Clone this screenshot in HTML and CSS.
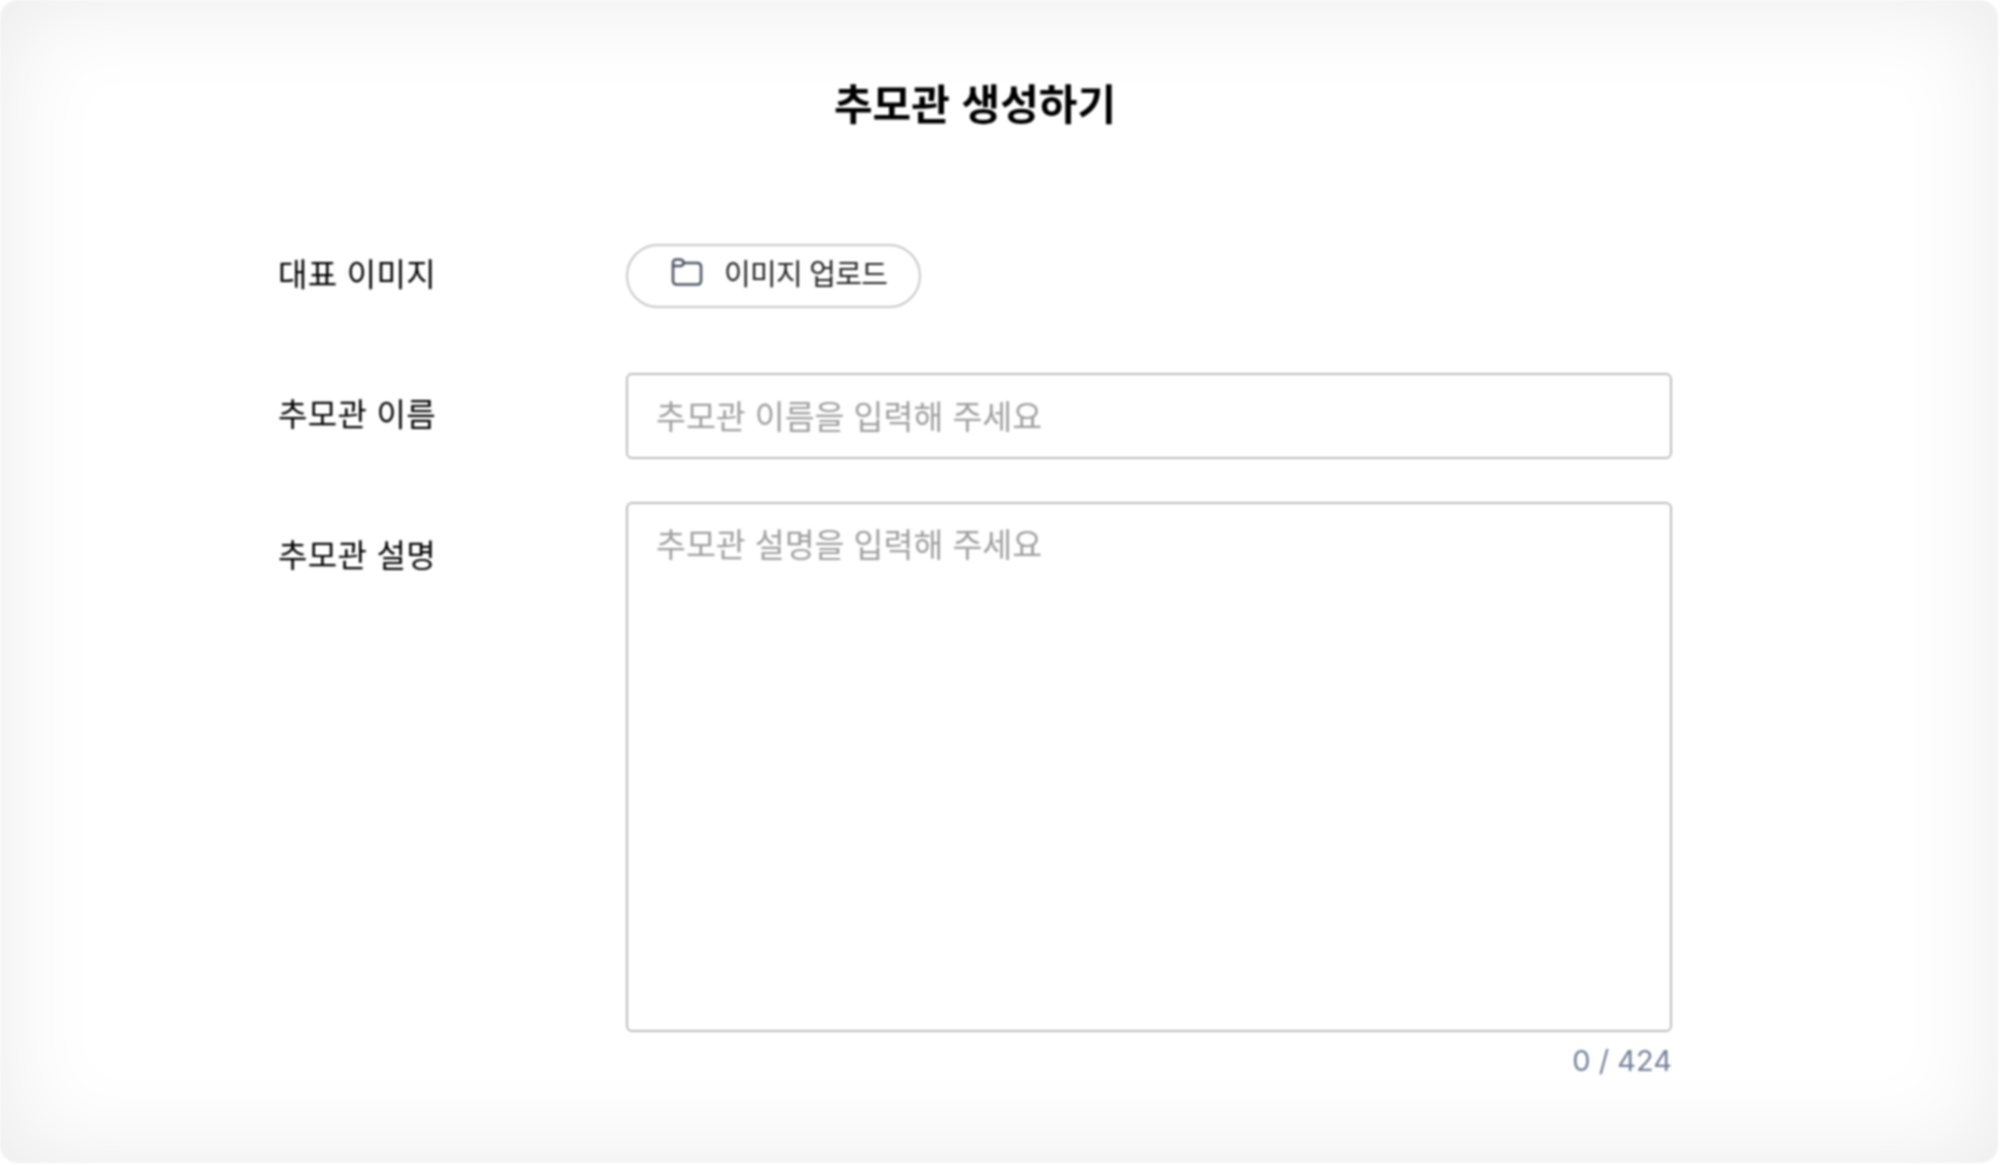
FILE: index.html
```html
<!DOCTYPE html>
<html lang="ko">
<head>
<meta charset="utf-8">
<title>추모관 생성하기</title>
<link rel="stylesheet" href="styles.css">
</head>
<body>
<main class="frame">
  <h1 class="title">추모관 생성하기</h1>
  <form class="form">
    <div class="row row-image">
      <span class="label">대표 이미지</span>
      <button type="button" class="upload">
        <svg class="folder" width="34" height="28" viewBox="0 0 34 28" fill="none" stroke="#4f5866" stroke-width="2.6" stroke-linejoin="round" aria-hidden="true">
          <path d="M3 6.5V23a3.5 3.5 0 0 0 3.5 3.5h21A3.5 3.5 0 0 0 31 23V8.5A3.5 3.5 0 0 0 27.500 5H13.500"/>
          <path d="M3 6.500V4.500A3 3 0 0 1 6 1.500h4.500a3 3 0 0 1 3 3.500 3 3 0 0 1-3 3H6A3 3 0 0 1 3 6.500z"/>
        </svg>
        <span>이미지 업로드</span>
      </button>
    </div>
    <div class="row row-name">
      <label class="label" for="name">추모관 이름</label>
      <input class="field" id="name" type="text" placeholder="추모관 이름을 입력해 주세요">
    </div>
    <div class="row row-desc">
      <label class="label" for="desc">추모관 설명</label>
      <div class="desc-col">
        <textarea class="field area" id="desc" placeholder="추모관 설명을 입력해 주세요"></textarea>
        <div class="counter">0 / 424</div>
      </div>
    </div>
  </form>
</main>
</body>
</html>
```
FILE: styles.css
```css
* { box-sizing: border-box; }
html, body { margin: 0; height: 100%; background: #fff; }
body { padding: 0 2px 2px 0; font-family: "Noto Sans CJK KR", "Noto Sans", sans-serif; color: #000; overflow: hidden; }
.frame {
  height: 1163px;
  border-radius: 18px;
  background: #fff;
  box-shadow: inset 0 0 100px rgba(0, 0, 0, 0.085);
  padding: 0 326px 0 278px;
  overflow: hidden;
  filter: blur(0.8px);
}
.title {
  margin: 0;
  padding-top: 71px;
  height: 244px;
  font-size: 42px;
  line-height: 62px;
  font-weight: 700;
  color: #000;
  text-align: center;
}
.form { display: flex; flex-direction: column; }
.row { display: grid; grid-template-columns: 348px 1046px; }
.row-image { height: 129px; }
.row-name { height: 129px; }
.label { font-size: 32px; line-height: 46px; font-weight: 400; color: #000; letter-spacing: 0.3px; }
.row-image .label { padding-top: 5px; }
.row-name .label { padding-top: 16px; }
.row-desc .label { padding-top: 28px; }
.upload {
  display: flex;
  align-items: center;
  gap: 20px;
  width: 295px;
  height: 64px;
  padding: 0 0 8px 42px;
  background: #fff;
  border: 2px solid #c8c8c8;
  border-radius: 32px;
  font: 400 29px/40px "Noto Sans CJK KR", sans-serif;
  letter-spacing: -0.7px;
  color: #222;
  white-space: nowrap;
}
.folder { flex: none; }
.field {
  display: block;
  width: 100%;
  height: 86px;
  padding: 0 28px 4px;
  background: #fff;
  border: 2px solid #bcbcbc;
  border-radius: 6px;
  outline: none;
  font: 400 32.5px/44px "Noto Sans CJK KR", sans-serif;
  color: #222;
}
.field::placeholder { color: #9e9e9e; opacity: 1; }
.area { height: 530px; padding: 17px 28px; resize: none; }
.counter {
  margin-top: 9px;
  text-align: right;
  font: 400 29px/40px Inter, sans-serif;
  color: #74829c;
}
```
